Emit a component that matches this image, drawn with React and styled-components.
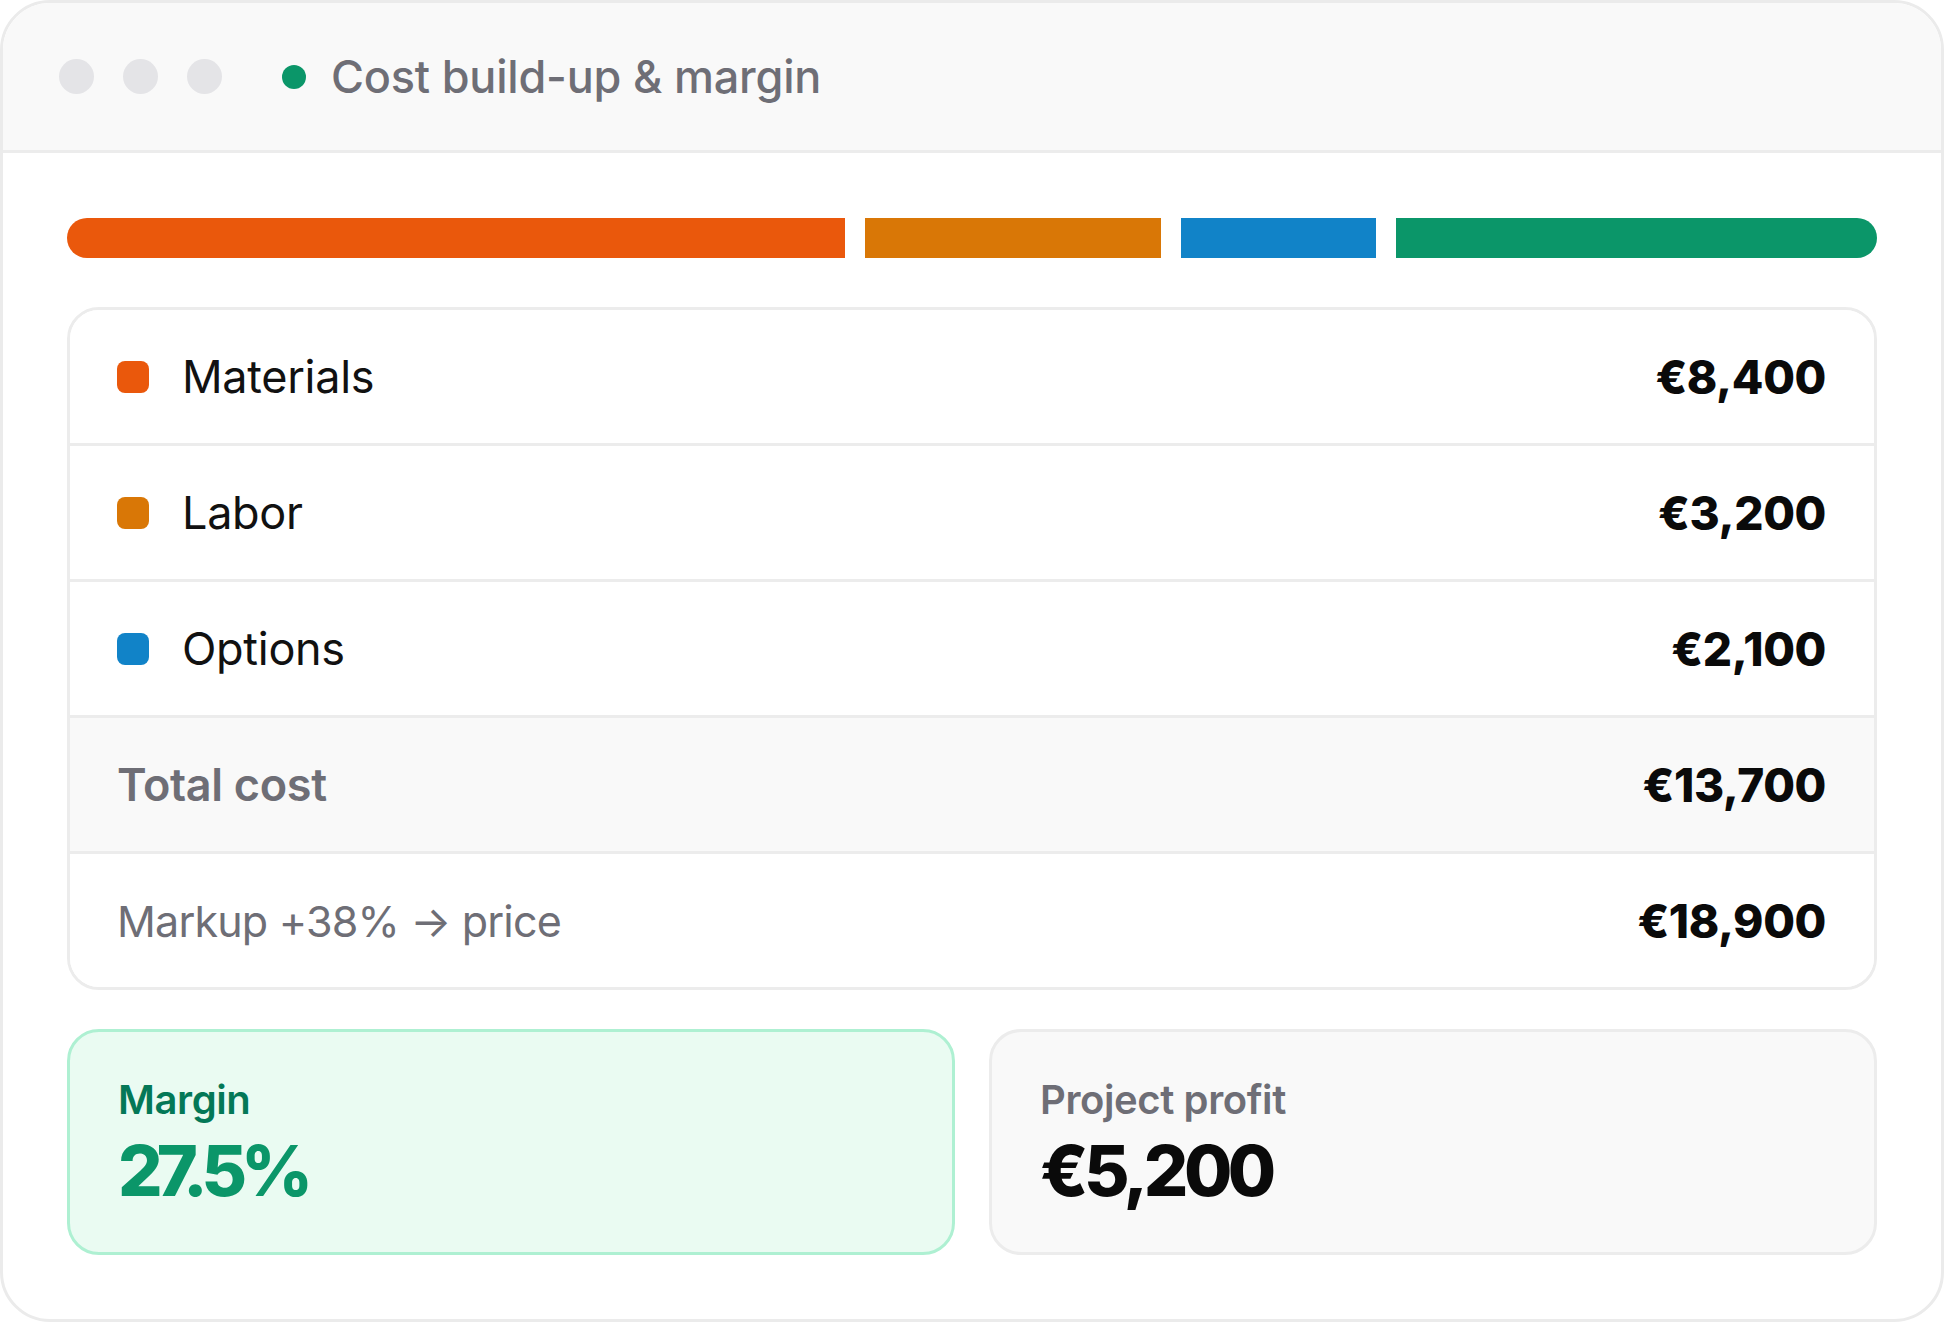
import React from 'react'
import styled, { createGlobalStyle } from 'styled-components'

const GlobalStyle = createGlobalStyle`
  html, body {
    margin: 0;
    padding: 0;
    background: #ffffff;
  }
  body {
    font-family: Inter, "Noto Sans", "Liberation Sans", sans-serif;
    -webkit-font-smoothing: antialiased;
  }
  * {
    box-sizing: border-box;
  }
`

const costs = [
  { label: 'Materials', amount: 8400, color: '#ea580c' },
  { label: 'Labor', amount: 3200, color: '#d97706' },
  { label: 'Options', amount: 2100, color: '#1183c8' },
]

const profit = 5200
const markup = 0.38

const euro = (n) => '€' + n.toLocaleString('en-US')

const Window = styled.div`
  width: 1944px;
  height: 1322px;
  border: 3px solid #ebebeb;
  border-radius: 50px;
  overflow: hidden;
  background: #ffffff;
  display: flex;
  flex-direction: column;
`

const TitleBar = styled.div`
  height: 150px;
  flex-shrink: 0;
  display: flex;
  align-items: center;
  padding-left: 56px;
  background: #f9f9f9;
  border-bottom: 3px solid #ececec;
`

const Dots = styled.div`
  display: flex;
  gap: 29px;
`

const Dot = styled.span`
  width: 35px;
  height: 35px;
  border-radius: 50%;
  background: #e4e4e7;
`

const LiveDot = styled.span`
  width: 24px;
  height: 24px;
  border-radius: 50%;
  background: #0b9669;
  margin-left: 60px;
`

const Title = styled.div`
  margin-left: 25px;
  font-size: 45px;
  font-weight: 500;
  color: #6e6e76;
  letter-spacing: -0.2px;
`

const Body = styled.div`
  padding: 65px 64px 0;
  display: flex;
  flex-direction: column;
`

const StackBar = styled.div`
  display: flex;
  gap: 20px;
  height: 40px;
  margin-bottom: 49px;
`

const Segment = styled.div`
  background: ${(p) => p.$color};
  &:first-child {
    border-radius: 20px 0 0 20px;
  }
  &:last-child {
    border-radius: 0 20px 20px 0;
  }
`

const Table = styled.div`
  border: 3px solid #ececec;
  border-radius: 32px;
  overflow: hidden;
  margin-bottom: 39px;
`

const Row = styled.div`
  box-sizing: content-box;
  height: 133px;
  display: flex;
  align-items: center;
  padding: 0 48px 0 47px;
  background: ${(p) => (p.$shaded ? '#f9f9f9' : '#ffffff')};
  & + & {
    border-top: 3px solid #ececec;
  }
`

const Swatch = styled.span`
  width: 32px;
  height: 32px;
  border-radius: 8px;
  background: ${(p) => p.$color};
  margin-right: 33px;
  flex-shrink: 0;
`

const Label = styled.div`
  flex: 1;
  font-size: ${(p) => (p.$small ? '43px' : '45px')};
  font-weight: ${(p) => (p.$strong ? 600 : 400)};
  color: ${(p) => (p.$muted ? '#6e6e76' : '#111111')};
  letter-spacing: ${(p) => (p.$small ? '-0.8px' : '-0.3px')};
`

const Amount = styled.div`
  font-size: 46px;
  font-weight: 800;
  color: #0a0a0a;
  letter-spacing: -0.4px;
`

const Cards = styled.div`
  display: grid;
  grid-template-columns: 1fr 1fr;
  gap: 34px;
`

const StatCard = styled.div`
  height: 226px;
  border: 3px solid ${(p) => (p.$accent ? '#aef0d2' : '#ececec')};
  background: ${(p) => (p.$accent ? '#eafbf2' : '#f9f9f9')};
  border-radius: 32px;
  padding: 0 48px;
  display: flex;
  flex-direction: column;
  justify-content: center;
  gap: 8px;
`

const StatLabel = styled.div`
  font-size: 40px;
  font-weight: 600;
  color: ${(p) => (p.$accent ? '#047857' : '#6e6e76')};
  letter-spacing: -0.4px;
`

const StatValue = styled.div`
  font-size: 70px;
  font-weight: 800;
  line-height: 1.1;
  color: ${(p) => (p.$accent ? '#0b9669' : '#0a0a0a')};
  letter-spacing: ${(p) => (p.$accent ? '-6px' : '-4.5px')};
`

export default function App() {
  const total = costs.reduce((s, c) => s + c.amount, 0)
  const price = total + profit
  const margin = ((profit / price) * 100).toFixed(1)

  return (
    <>
      <GlobalStyle />
      <Window>
        <TitleBar>
          <Dots>
            <Dot />
            <Dot />
            <Dot />
          </Dots>
          <LiveDot />
          <Title>Cost build-up &amp; margin</Title>
        </TitleBar>
        <Body>
          <StackBar>
            {costs.map((c) => (
              <Segment key={c.label} $color={c.color} style={{ flexGrow: c.amount }} />
            ))}
            <Segment $color="#0b9669" style={{ flexGrow: profit }} />
          </StackBar>

          <Table>
            {costs.map((c) => (
              <Row key={c.label}>
                <Swatch $color={c.color} />
                <Label>{c.label}</Label>
                <Amount>{euro(c.amount)}</Amount>
              </Row>
            ))}
            <Row $shaded>
              <Label $muted $strong>Total cost</Label>
              <Amount>{euro(total)}</Amount>
            </Row>
            <Row>
              <Label $muted $small>Markup +{Math.round(markup * 100)}% → price</Label>
              <Amount>{euro(price)}</Amount>
            </Row>
          </Table>

          <Cards>
            <StatCard $accent>
              <StatLabel $accent>Margin</StatLabel>
              <StatValue $accent>{margin}%</StatValue>
            </StatCard>
            <StatCard>
              <StatLabel>Project profit</StatLabel>
              <StatValue>{euro(profit)}</StatValue>
            </StatCard>
          </Cards>
        </Body>
      </Window>
    </>
  )
}
